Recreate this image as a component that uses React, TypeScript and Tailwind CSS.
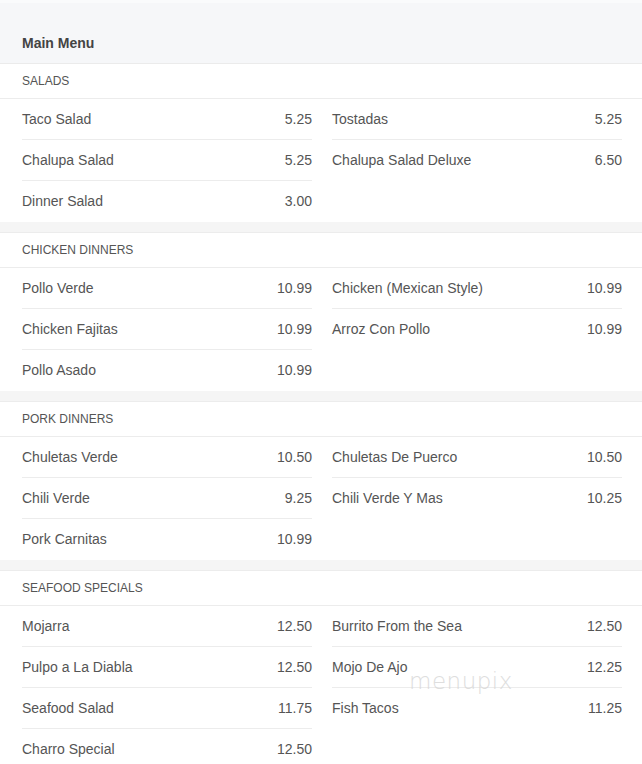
type Item = { name: string; price: string };
type Section = { title: string; items: Item[] };

const sections: Section[] = [
  {
    title: "SALADS",
    items: [
      { name: "Taco Salad", price: "5.25" },
      { name: "Tostadas", price: "5.25" },
      { name: "Chalupa Salad", price: "5.25" },
      { name: "Chalupa Salad Deluxe", price: "6.50" },
      { name: "Dinner Salad", price: "3.00" },
    ],
  },
  {
    title: "CHICKEN DINNERS",
    items: [
      { name: "Pollo Verde", price: "10.99" },
      { name: "Chicken (Mexican Style)", price: "10.99" },
      { name: "Chicken Fajitas", price: "10.99" },
      { name: "Arroz Con Pollo", price: "10.99" },
      { name: "Pollo Asado", price: "10.99" },
    ],
  },
  {
    title: "PORK DINNERS",
    items: [
      { name: "Chuletas Verde", price: "10.50" },
      { name: "Chuletas De Puerco", price: "10.50" },
      { name: "Chili Verde", price: "9.25" },
      { name: "Chili Verde Y Mas", price: "10.25" },
      { name: "Pork Carnitas", price: "10.99" },
    ],
  },
  {
    title: "SEAFOOD SPECIALS",
    items: [
      { name: "Mojarra", price: "12.50" },
      { name: "Burrito From the Sea", price: "12.50" },
      { name: "Pulpo a La Diabla", price: "12.50" },
      { name: "Mojo De Ajo", price: "12.25" },
      { name: "Seafood Salad", price: "11.75" },
      { name: "Fish Tacos", price: "11.25" },
      { name: "Charro Special", price: "12.50" },
    ],
  },
];

function Column({ items }: { items: Item[] }) {
  return (
    <div className="flex flex-col divide-y divide-[#ececec]">
      {items.map((it) => (
        <div key={it.name} className="h-[41px] flex items-center justify-between text-[14px]">
          <span>{it.name}</span>
          <span>{it.price}</span>
        </div>
      ))}
    </div>
  );
}

function MenuSection({ section, last }: { section: Section; last: boolean }) {
  const left = section.items.filter((_, i) => i % 2 === 0);
  const right = section.items.filter((_, i) => i % 2 === 1);
  return (
    <div>
      <div className="h-[35px] flex items-center px-[22px] text-[12px] border-b border-[#ececec]">
        {section.title}
      </div>
      <div className="grid grid-cols-2 gap-x-[20px] pl-[22px] pr-[20px]">
        <Column items={left} />
        <Column items={right} />
      </div>
      {!last && <div className="h-[11px] bg-[#f5f5f5] border-b border-[#ececec]" />}
    </div>
  );
}

export default function App() {
  return (
    <div className="relative w-[642px] h-[764px] overflow-hidden bg-white text-[#555] font-['Liberation_Sans',Arial,sans-serif]">
      <div className="h-[64px] bg-[#f6f7f9] border-t-[3px] border-t-[#fafbfc] border-b border-b-[#ebebeb] px-[22px] pt-[31px]">
        <h3 className="text-[14px] leading-[18px] font-bold text-[#444]">Main Menu</h3>
      </div>
      {sections.map((s, i) => (
        <MenuSection key={s.title} section={s} last={i === sections.length - 1} />
      ))}
      <div className="absolute left-[409px] top-[667px] text-[23px] leading-[28px] tracking-[0.5px] text-[#d6d6d6] font-['DejaVu_Sans',sans-serif] font-extralight opacity-80">
        menupix
      </div>
    </div>
  );
}
